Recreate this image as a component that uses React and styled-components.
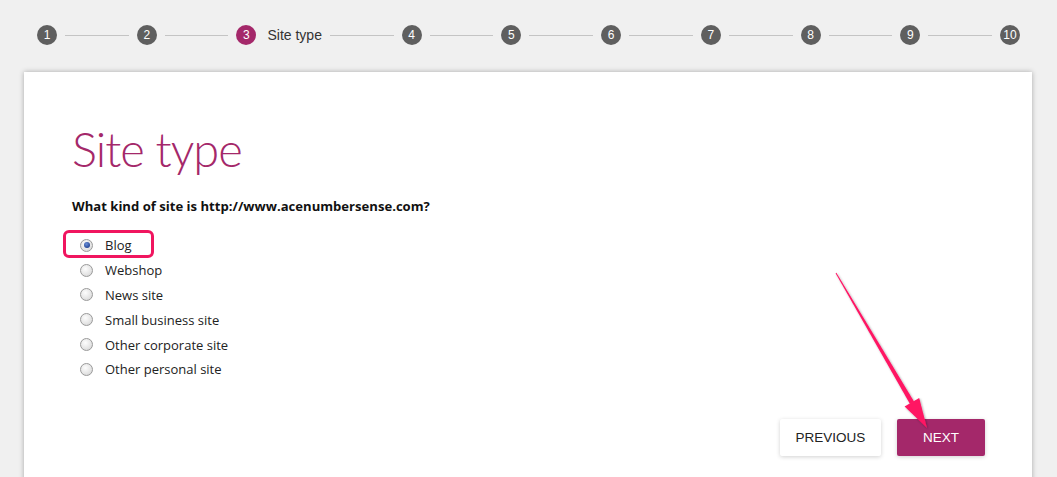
import React from "react";
import styled, { createGlobalStyle } from "styled-components";

const GlobalStyle = createGlobalStyle`
  html, body {
    margin: 0;
    padding: 0;
    overflow: hidden;
    background: #f0f0f0;
  }
`;

const steps = [1, 2, 3, 4, 5, 6, 7, 8, 9, 10];
const options = [
  "Blog",
  "Webshop",
  "News site",
  "Small business site",
  "Other corporate site",
  "Other personal site",
];

const Page = styled.div`
  position: relative;
  width: 1057px;
  height: 477px;
  overflow: hidden;
  font-family: "Liberation Sans", Arial, sans-serif;
`;

const Stepper = styled.div`
  display: flex;
  align-items: center;
  padding: 25px 0 0 37px;
  width: 983px;
`;

const Dot = styled.div`
  flex: none;
  width: 20px;
  height: 20px;
  border-radius: 50%;
  background: ${(p) => (p.active ? "#a4286a" : "#5f5f5f")};
  color: #fff;
  font-size: 12px;
  display: flex;
  align-items: center;
  justify-content: center;
`;

const StepLabel = styled.span`
  flex: none;
  margin-left: 11px;
  font-size: 14px;
  color: #333;
`;

const Line = styled.div`
  flex: 1;
  height: 1px;
  margin: 0 8px;
  background: #c4c4c4;
`;

const Card = styled.div`
  margin: 27px 25px 0 24px;
  background: #fff;
  box-shadow: 0 0 5px rgba(0, 0, 0, 0.3);
  padding: 48px 47px 60px 48px;
`;

const Title = styled.h1`
  margin: 0;
  font-family: Lato, "Open Sans", sans-serif;
  font-weight: 300;
  font-size: 47px;
  letter-spacing: -1px;
  line-height: 58px;
  color: #a4286a;
`;

const Question = styled.p`
  margin: 20px 0 0;
  font-family: "Open Sans", sans-serif;
  font-size: 13.1px;
  line-height: 16px;
  font-weight: 700;
  color: #111;
`;

const List = styled.div`
  margin-top: 19px;
`;

const Row = styled.label`
  position: relative;
  display: flex;
  align-items: center;
  height: 24.8px;
  padding-left: 8px;
  font-family: "Open Sans", sans-serif;
  font-size: 13px;
  color: #222;
`;

const Radio = styled.span`
  flex: none;
  width: 11px;
  height: 11px;
  border-radius: 50%;
  border: 1px solid #9a9a9a;
  background: radial-gradient(circle at 40% 35%, #fdfdfd 0%, #e6e6e6 55%, #cfcfcf 100%);
  margin-right: 12px;
  display: flex;
  align-items: center;
  justify-content: center;
  &::after {
    content: "";
    display: ${(p) => (p.checked ? "block" : "none")};
    width: 6px;
    height: 6px;
    border-radius: 50%;
    background: radial-gradient(circle at 40% 35%, #6a8fd8 0%, #1f3f8f 80%);
  }
`;

const Mark = styled.span`
  position: absolute;
  left: -9px;
  top: -3px;
  width: 85px;
  height: 22px;
  border: 3px solid #f0155f;
  border-radius: 6px;
`;

const Actions = styled.div`
  display: flex;
  justify-content: flex-end;
  gap: 16px;
  margin-top: 37px;
`;

const Button = styled.button`
  font-family: "Liberation Sans", Arial, sans-serif;
  font-size: 13.5px;
  border: none;
  border-radius: 2px;
  height: 37px;
  padding: 0;
  width: ${(p) => (p.primary ? "88px" : "101px")};
  background: ${(p) => (p.primary ? "#a4286a" : "#fff")};
  color: ${(p) => (p.primary ? "#fff" : "#222")};
  box-shadow: 0 1px 4px rgba(0, 0, 0, 0.18);
`;

const Overlay = styled.svg`
  position: absolute;
  left: 0;
  top: 0;
  pointer-events: none;
`;

export default function App() {
  return (
    <Page>
      <GlobalStyle />
      <Stepper>
        {steps.map((n, i) => (
          <React.Fragment key={n}>
            <Dot active={n === 3}>{n}</Dot>
            {n === 3 && <StepLabel>Site type</StepLabel>}
            {i < steps.length - 1 && <Line />}
          </React.Fragment>
        ))}
      </Stepper>
      <Card>
        <Title>Site type</Title>
        <Question>What kind of site is http://www.acenumbersense.com?</Question>
        <List>
          {options.map((o, i) => (
            <Row key={o}>
              {i === 0 && <Mark />}
              <Radio checked={i === 0} />
              {o}
            </Row>
          ))}
        </List>
        <Actions>
          <Button>PREVIOUS</Button>
          <Button primary>NEXT</Button>
        </Actions>
      </Card>
      <Overlay width="1057" height="477">
        <defs>
          <filter id="sh" x="-20%" y="-20%" width="140%" height="140%">
            <feDropShadow dx="1" dy="1" stdDeviation="0.8" floodOpacity="0.35" />
          </filter>
        </defs>
        <g filter="url(#sh)" fill="#ff1463">
          <polygon points="835.6,273.2 836.4,272.8 914,401.5 910,403.9" />
          <polygon points="927,428 904.6,406.6 919.2,398" />
        </g>
      </Overlay>
    </Page>
  );
}
